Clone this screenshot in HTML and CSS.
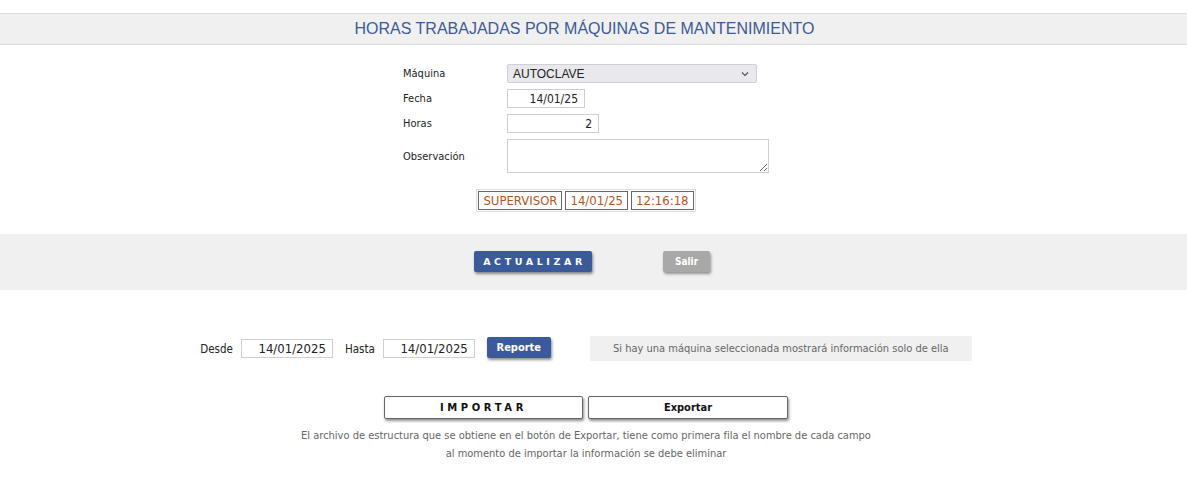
FILE: index.html
```html
<!DOCTYPE html>
<html lang="es">
<head>
  <meta charset="UTF-8">
  <title>Horas trabajadas por máquinas</title>
  <link rel="stylesheet" href="styles.css">
</head>
<body>

  <div class="title-bar">
    <h1>HORAS TRABAJADAS POR MÁQUINAS DE MANTENIMIENTO</h1>
  </div>

  <div class="page">
    <form class="main-form">
      <table class="form-table">
        <tr>
          <td class="lbl">Máquina</td>
          <td>
            <div class="select-box">
              <span>AUTOCLAVE</span>
              <svg width="8" height="6" viewBox="0 0 8 6"><path d="M1 1.5 L4 4.5 L7 1.5" fill="none" stroke="#555" stroke-width="1.1"/></svg>
            </div>
          </td>
        </tr>
        <tr>
          <td class="lbl">Fecha</td>
          <td><input type="text" class="inp inp-fecha" value="14/01/25"></td>
        </tr>
        <tr>
          <td class="lbl">Horas</td>
          <td><input type="text" class="inp inp-horas" value="2"></td>
        </tr>
        <tr class="row-obs">
          <td class="lbl">Observación</td>
          <td><textarea class="obs"></textarea></td>
        </tr>
      </table>

      <div class="stamp">
        <span>SUPERVISOR</span>
        <span>14/01/25</span>
        <span>12:16:18</span>
      </div>
    </form>
  </div>

  <div class="action-band">
    <div class="actions">
      <button type="button" class="btn-blue btn-update">ACTUALIZAR</button>
      <button type="button" class="btn-gray">Salir</button>
    </div>
  </div>

  <div class="page">
    <div class="report-row">
      <label>Desde</label>
      <input type="text" class="inp inp-date" value="14/01/2025">
      <label>Hasta</label>
      <input type="text" class="inp inp-date" value="14/01/2025">
      <button type="button" class="btn-blue btn-report">Reporte</button>
      <div class="note">Si hay una máquina seleccionada mostrará información solo de ella</div>
    </div>

    <div class="io-row">
      <button type="button" class="btn-white btn-import">IMPORTAR</button>
      <button type="button" class="btn-white">Exportar</button>
    </div>

    <p class="help">El archivo de estructura que se obtiene en el botón de Exportar, tiene como primera fila el nombre de cada campo<br>al momento de importar la información se debe eliminar</p>
  </div>

</body>
</html>
```

FILE: styles.css
```css
* {
  box-sizing: border-box;
}
body {
  margin: 0;
  font-family: "DejaVu Sans Condensed", "DejaVu Sans", sans-serif;
  font-size: 11px;
  color: #222;
  background: #fff;
}
.page {
  margin-right: 15px;
}
.title-bar {
  margin-top: 13px;
  background: #f0f0f0;
  border-top: 1px solid #dcdcdc;
  border-bottom: 1px solid #dcdcdc;
  height: 32px;
  padding-right: 18px;
  display: flex;
  align-items: center;
  justify-content: center;
}
.title-bar h1 {
  margin: 0;
  font-family: "Liberation Sans", Arial, sans-serif;
  font-weight: normal;
  font-size: 16px;
  color: #3d5a96;
}

/* form */
.main-form {
  display: flex;
  flex-direction: column;
  align-items: center;
  padding-top: 16px;
}
.form-table {
  border-collapse: collapse;
}
.form-table td {
  padding: 0;
  height: 25px;
  vertical-align: middle;
}
.form-table .lbl {
  width: 104px;
}
.form-table td:last-child {
  width: 262px;
}
.row-obs td {
  height: 40px;
}
.select-box {
  width: 250px;
  height: 19px;
  background: #e9e9ed;
  border: 1px solid #d0d0d4;
  border-radius: 2px;
  display: flex;
  align-items: center;
  justify-content: space-between;
  padding: 0 7px 0 5px;
  font-family: "Liberation Sans", Arial, sans-serif;
  font-size: 12px;
  color: #222;
}
.inp {
  height: 19px;
  border: 1px solid #cfcfcf;
  background: #fff;
  text-align: right;
  font-family: "DejaVu Sans Condensed", "DejaVu Sans", sans-serif;
  font-size: 12px;
  color: #222;
  padding: 0 6px;
  outline: none;
  display: block;
}
.inp-fecha {
  width: 78px;
}
.inp-horas {
  width: 92px;
}
.obs {
  display: block;
  width: 262px;
  height: 34px;
  border: 1px solid #cfcfcf;
  resize: both;
}
.stamp {
  margin-top: 13px;
  border: 1px solid #dedede;
  padding: 1px;
  display: flex;
  gap: 3px;
}
.stamp span {
  border: 1px solid #666;
  height: 19px;
  padding: 0 4px;
  display: flex;
  align-items: center;
  font-size: 13px;
  color: #b4561f;
}

/* action band */
.action-band {
  margin-top: 22px;
  background: #f0f0f0;
  height: 56px;
}
.actions {
  height: 100%;
  display: flex;
  justify-content: center;
  align-items: center;
  gap: 71px;
  padding-right: 3px;
  padding-bottom: 1px;
}
button {
  font-family: "DejaVu Sans Condensed", "DejaVu Sans", sans-serif;
  cursor: pointer;
}
.btn-blue {
  background: #3b5a9b;
  color: #fff;
  border: none;
  border-radius: 2px;
  font-weight: bold;
  box-shadow: 1px 2px 3px rgba(0, 0, 0, 0.45);
}
.btn-update {
  width: 118px;
  height: 21px;
  font-family: "DejaVu Sans", sans-serif;
  font-size: 9.5px;
  letter-spacing: 3.6px;
  padding: 0 0 0 3px;
}
.btn-gray {
  width: 47px;
  height: 21px;
  background: #a8a8a8;
  color: #fff;
  border: none;
  border-radius: 2px;
  font-weight: bold;
  font-size: 10px;
  box-shadow: 1px 2px 3px rgba(0, 0, 0, 0.4);
}

/* report row */
.report-row {
  margin-top: 46px;
  display: flex;
  justify-content: center;
  align-items: center;
  font-size: 11.5px;
}
.report-row label {
  margin-right: 8px;
}
.inp-date {
  width: 92px;
  font-size: 13px;
  margin-right: 12px;
}
.btn-report {
  width: 64px;
  height: 21px;
  font-size: 11px;
  margin-right: 39px;
  margin-top: -2px;
}
.note {
  width: 382px;
  height: 25px;
  background: #f0f0f0;
  color: #666;
  display: flex;
  align-items: center;
  justify-content: center;
  font-size: 11px;
}

/* import / export */
.io-row {
  margin-top: 35px;
  display: flex;
  justify-content: center;
  gap: 5px;
}
.btn-white {
  width: 200px;
  height: 23px;
  background: #fff;
  border: 1px solid #666;
  border-radius: 2px;
  font-weight: bold;
  font-size: 11px;
  color: #111;
  box-shadow: 1px 2px 3px rgba(0, 0, 0, 0.45);
}
.btn-import {
  width: 199px;
  font-family: "DejaVu Sans", sans-serif;
  font-size: 10px;
  letter-spacing: 3.6px;
}
.help {
  margin: 8px 0 0;
  text-align: center;
  color: #666;
  font-size: 11px;
  line-height: 18px;
}
```
